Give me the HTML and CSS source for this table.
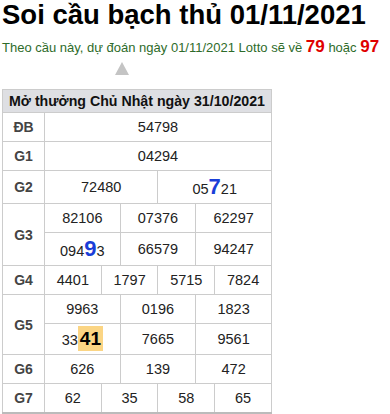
FILE: index.html
```html
<!DOCTYPE html>
<html lang="vi">
<head>
<meta charset="utf-8">
<link rel="stylesheet" href="styles.css">
</head>
<body>
<h1 class="title">Soi cầu bạch thủ 01/11/2021</h1>
<p class="predict">Theo cầu này, dự đoán ngày 01/11/2021 Lotto sẽ về <b class="lotto">79</b> hoặc <b class="lotto">97</b></p>
<div class="arrow"></div>
<table class="kq">
  <colgroup>
    <col class="c-label">
    <col><col><col><col><col><col><col><col><col><col><col><col>
  </colgroup>
  <thead>
    <tr><th colspan="13" class="head">Mở thưởng Chủ Nhật ngày 31/10/2021</th></tr>
  </thead>
  <tbody>
    <tr><td class="lbl">ĐB</td><td colspan="12">54798</td></tr>
    <tr><td class="lbl">G1</td><td colspan="12">04294</td></tr>
    <tr><td class="lbl">G2</td><td colspan="6">72480</td><td colspan="6">05<b class="hit">7</b>21</td></tr>
    <tr><td class="lbl" rowspan="2">G3</td><td colspan="4">82106</td><td colspan="4">07376</td><td colspan="4">62297</td></tr>
    <tr><td colspan="4">094<b class="hit">9</b>3</td><td colspan="4">66579</td><td colspan="4">94247</td></tr>
    <tr><td class="lbl">G4</td><td colspan="3">4401</td><td colspan="3">1797</td><td colspan="3">5715</td><td colspan="3">7824</td></tr>
    <tr><td class="lbl" rowspan="2">G5</td><td colspan="4">9963</td><td colspan="4">0196</td><td colspan="4">1823</td></tr>
    <tr><td colspan="4">33<b class="mark">41</b></td><td colspan="4">7665</td><td colspan="4">9561</td></tr>
    <tr><td class="lbl">G6</td><td colspan="4">626</td><td colspan="4">139</td><td colspan="4">472</td></tr>
    <tr><td class="lbl">G7</td><td colspan="3">62</td><td colspan="3">35</td><td colspan="3">58</td><td colspan="3">65</td></tr>
  </tbody>
</table>
</body>
</html>
```

FILE: styles.css
```css
html, body {
  margin: 0;
  padding: 0;
  background: #fff;
}
body {
  padding: 0 2px;
  font-family: Arial, "Liberation Sans", sans-serif;
  color: #222;
}
.title {
  margin: 0;
  font-size: 27.5px;
  line-height: 30px;
  font-weight: bold;
  color: #000;
}
.predict {
  margin: 7px 0 0;
  font-size: 13px;
  line-height: 20px;
  color: #2e6b2a;
}
.lotto {
  color: #e00000;
  font-size: 17px;
}
.arrow {
  width: 0;
  height: 0;
  margin: 4px 0 0 113px;
  border-left: 7px solid transparent;
  border-right: 7px solid transparent;
  border-bottom: 13px solid #c4c4c4;
}
.kq {
  margin-top: 14px;
  width: 270px;
  border-collapse: collapse;
  table-layout: fixed;
  border-bottom: 2px solid #bbb;
}
.c-label { width: 42px; }
.kq th, .kq td {
  border: 1px solid #ccc;
  text-align: center;
  padding: 5px 0;
  font-size: 14.5px;
  line-height: 18px;
}
.kq td { color: #222; }
.kq .head {
  background: #dedfe3;
  font-weight: bold;
  font-size: 14.2px;
  line-height: 16px;
  padding: 3px 0;
  color: #111;
}
.kq .lbl {
  font-weight: bold;
  color: #444;
  font-size: 14px;
}
.hit {
  color: #1a3ed8;
  font-size: 22px;
  line-height: 22px;
}
.mark {
  background: #fbd584;
  color: #000;
  font-size: 19px;
  line-height: 20px;
  padding: 2px 2px;
}
```
